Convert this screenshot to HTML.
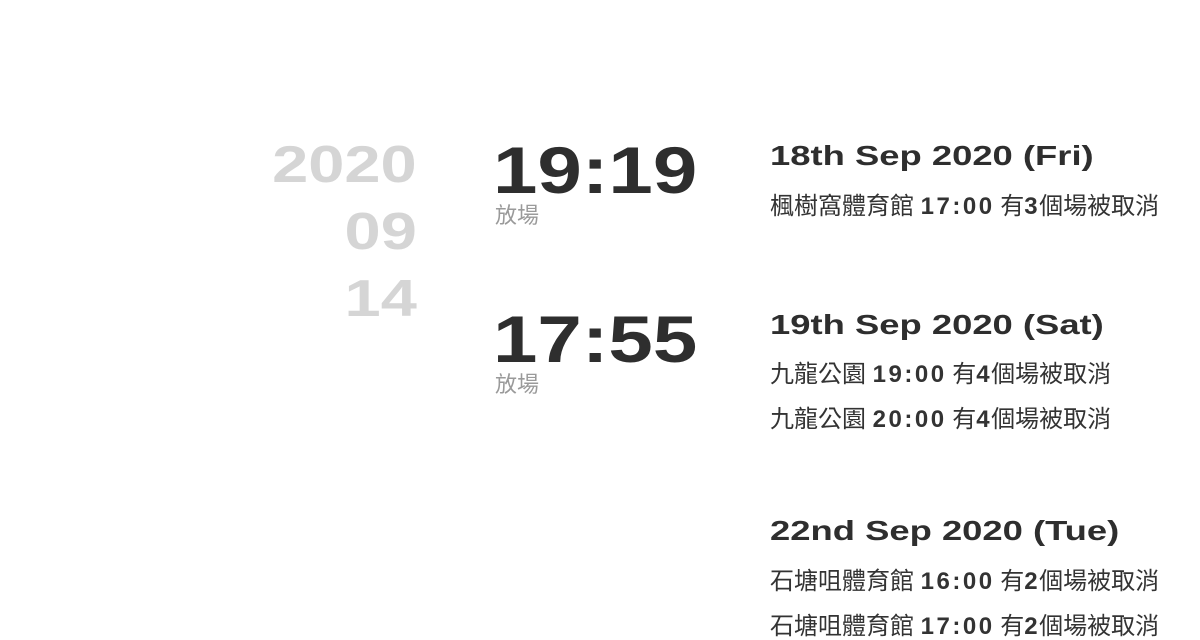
<!DOCTYPE html>
<html><head><meta charset="utf-8"><style>
body{margin:0;width:1200px;height:630px;background:#fff;overflow:hidden;position:relative;font-family:"Liberation Sans","Noto Sans CJK TC",sans-serif;color:#333}
.a{position:absolute;line-height:1;white-space:nowrap}
.y{font-weight:bold;font-size:52px;color:#d5d5d5;right:783px;transform:scaleX(1.25);transform-origin:right}
.t{font-weight:bold;font-size:66px;left:493px;transform:scaleX(1.21);transform-origin:left;color:#2e2e2e}
.s{font-size:22px;color:#9a9a9a;left:495px}
.h{font-weight:bold;font-size:28px;left:770px;transform:scaleX(1.3);transform-origin:left;color:#2e2e2e}
.l{font-size:24px;left:770px;color:#333}
.l b{letter-spacing:2.5px;margin-right:-1px}
</style></head><body>
<div class="a y" style="top:139px">2020</div>
<div class="a y" style="top:206px">09</div>
<div class="a y" style="top:273px">14</div>
<div class="a t" style="top:137px">19:19</div>
<div class="a s" style="top:205px">放場</div>
<div class="a t" style="top:306px">17:55</div>
<div class="a s" style="top:374px">放場</div>
<div class="a h" style="top:142px">18th Sep 2020 (Fri)</div>
<div class="a l" style="top:195px">楓樹窩體育館 <b>17:00</b> 有<b>3</b>個場被取消</div>
<div class="a h" style="top:311px">19th Sep 2020 (Sat)</div>
<div class="a l" style="top:363px">九龍公園 <b>19:00</b> 有<b>4</b>個場被取消</div>
<div class="a l" style="top:408px">九龍公園 <b>20:00</b> 有<b>4</b>個場被取消</div>
<div class="a h" style="top:517px">22nd Sep 2020 (Tue)</div>
<div class="a l" style="top:570px">石塘咀體育館 <b>16:00</b> 有<b>2</b>個場被取消</div>
<div class="a l" style="top:615px">石塘咀體育館 <b>17:00</b> 有<b>2</b>個場被取消</div>
</body></html>
